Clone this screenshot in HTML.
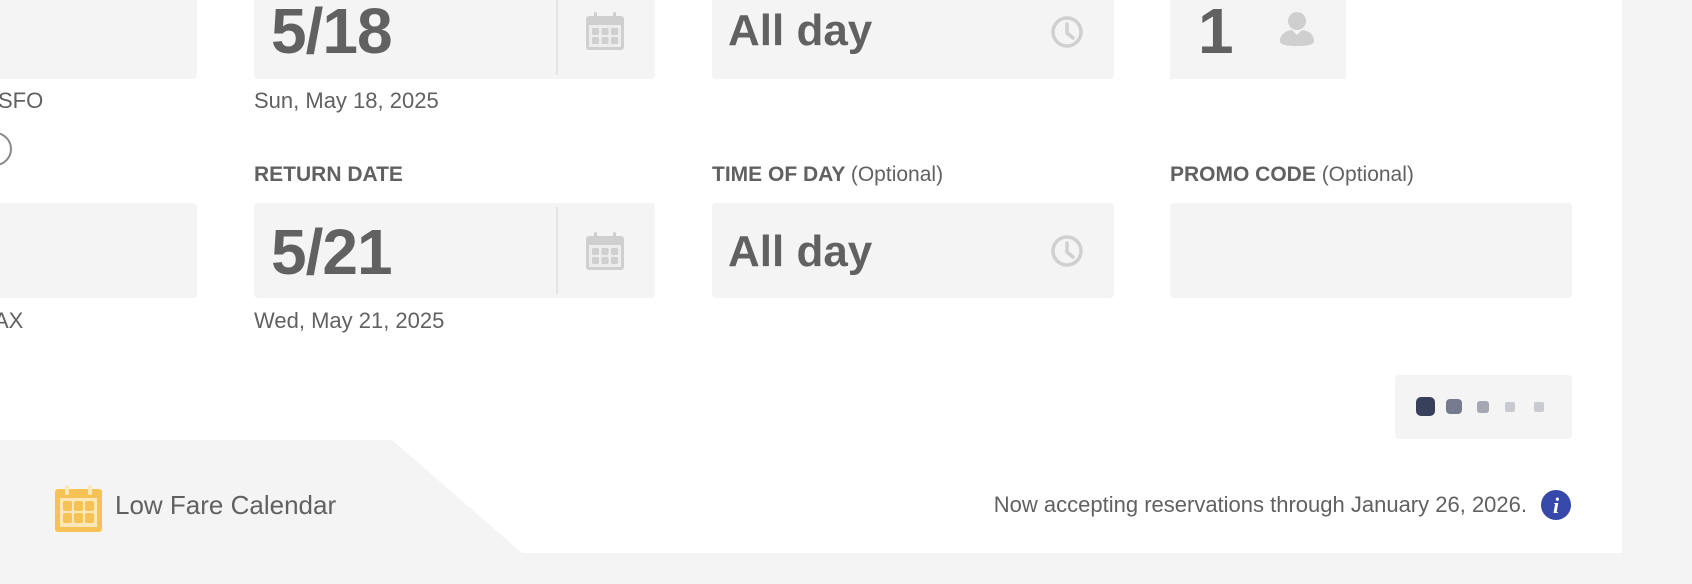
<!DOCTYPE html>
<html><head><style>
*{margin:0;padding:0;box-sizing:border-box}
body{width:1692px;height:584px;background:#f4f4f4;position:relative;overflow:hidden;font-family:"Liberation Sans",Arial,sans-serif;color:#616161}
.panel{position:absolute;left:0;top:0;width:1622px;height:553px;background:#fff}
.box{position:absolute;background:#f4f4f4;border-radius:4px}
.big{position:absolute;font-weight:bold;color:#616161}
.t{position:absolute;white-space:nowrap}
.lbl{position:absolute;font-size:21px;font-weight:bold;white-space:nowrap}
.lbl span{font-weight:normal}
.div{position:absolute;top:4px;bottom:4px;left:302px;width:2px;background:#e4e4e4}
</style></head><body>
<div class="panel"></div>
<svg style="position:absolute;left:0;top:0" width="1622" height="553"><polygon points="0,440 392,440 522,553 0,553" fill="#f4f4f4"/></svg>

<!-- left column -->
<div class="box" style="left:-10px;top:-10px;width:207px;height:89px"></div>
<div class="t" style="left:-2px;top:88px;font-size:22px">SFO</div>
<svg style="position:absolute;left:0;top:128px" width="20" height="44"><circle cx="-5" cy="21" r="16" fill="none" stroke="#888" stroke-width="2"/></svg>
<div class="box" style="left:-10px;top:203px;width:207px;height:95px"></div>
<div class="t" style="left:-6px;top:308px;font-size:22px">AX</div>

<!-- depart -->
<div class="box" style="left:254px;top:-10px;width:401px;height:89px"><div class="div"></div>
<div class="big" style="left:17px;top:4px;font-size:64px;letter-spacing:-1px">5/18</div>
<svg style="position:absolute;left:331px;top:22px" width="40" height="40" viewBox="0 0 40 40"><rect x="1" y="4" width="38" height="34" rx="3" fill="#cfcfcf"/><rect x="4" y="13" width="32" height="22" fill="#ececec"/><rect x="9" y="0" width="3" height="8" rx="1.5" fill="#cfcfcf"/><rect x="28" y="0" width="3" height="8" rx="1.5" fill="#cfcfcf"/><g fill="#cfcfcf"><rect x="7" y="16" width="7" height="7" rx="1.5"/><rect x="16.5" y="16" width="7" height="7" rx="1.5"/><rect x="26" y="16" width="7" height="7" rx="1.5"/><rect x="7" y="25" width="7" height="7" rx="1.5"/><rect x="16.5" y="25" width="7" height="7" rx="1.5"/><rect x="26" y="25" width="7" height="7" rx="1.5"/></g></svg>
</div>
<div class="t" style="left:254px;top:88px;font-size:22px">Sun, May 18, 2025</div>

<div class="lbl" style="left:254px;top:163px">RETURN DATE</div>
<div class="box" style="left:254px;top:203px;width:401px;height:95px"><div class="div"></div>
<div class="big" style="left:17px;top:12px;font-size:64px;letter-spacing:-1px">5/21</div>
<svg style="position:absolute;left:331px;top:29px" width="40" height="40" viewBox="0 0 40 40"><rect x="1" y="4" width="38" height="34" rx="3" fill="#cfcfcf"/><rect x="4" y="13" width="32" height="22" fill="#ececec"/><rect x="9" y="0" width="3" height="8" rx="1.5" fill="#cfcfcf"/><rect x="28" y="0" width="3" height="8" rx="1.5" fill="#cfcfcf"/><g fill="#cfcfcf"><rect x="7" y="16" width="7" height="7" rx="1.5"/><rect x="16.5" y="16" width="7" height="7" rx="1.5"/><rect x="26" y="16" width="7" height="7" rx="1.5"/><rect x="7" y="25" width="7" height="7" rx="1.5"/><rect x="16.5" y="25" width="7" height="7" rx="1.5"/><rect x="26" y="25" width="7" height="7" rx="1.5"/></g></svg>
</div>
<div class="t" style="left:254px;top:308px;font-size:22px">Wed, May 21, 2025</div>

<!-- time -->
<div class="box" style="left:712px;top:-10px;width:402px;height:89px">
<div class="big" style="left:16px;top:16px;font-size:44px">All day</div>
<svg style="position:absolute;left:337px;top:24px" width="36" height="36" viewBox="0 0 36 36"><circle cx="18" cy="18" r="14" fill="none" stroke="#d0d0d0" stroke-width="3.5"/><path d="M18 10v9l6 5" fill="none" stroke="#d0d0d0" stroke-width="3.5" stroke-linecap="round"/></svg>
</div>
<div class="lbl" style="left:712px;top:163px">TIME OF DAY <span>(Optional)</span></div>
<div class="box" style="left:712px;top:203px;width:402px;height:95px">
<div class="big" style="left:16px;top:24px;font-size:44px">All day</div>
<svg style="position:absolute;left:337px;top:30px" width="36" height="36" viewBox="0 0 36 36"><circle cx="18" cy="18" r="14" fill="none" stroke="#d0d0d0" stroke-width="3.5"/><path d="M18 10v9l6 5" fill="none" stroke="#d0d0d0" stroke-width="3.5" stroke-linecap="round"/></svg>
</div>

<!-- passengers -->
<div class="box" style="left:1170px;top:-10px;width:176px;height:89px;border-radius:0">
<div class="big" style="left:28px;top:4px;font-size:64px">1</div>
<svg style="position:absolute;left:108px;top:20px" width="38" height="38" viewBox="0 0 38 38"><circle cx="19" cy="11" r="9" fill="#cfcfcf"/><path d="M2 31c0-8 8-11 12-11l5 5 5-5c4 0 12 3 12 11 0 4-7 5-17 5S2 35 2 31z" fill="#cfcfcf"/></svg>
</div>
<div class="lbl" style="left:1170px;top:163px">PROMO CODE <span>(Optional)</span></div>
<div class="box" style="left:1170px;top:203px;width:402px;height:95px"></div>

<!-- dots -->
<div class="box" style="left:1395px;top:375px;width:177px;height:64px">
<div style="position:absolute;left:21px;top:22px;width:19px;height:19px;border-radius:5px;background:#39405b"></div>
<div style="position:absolute;left:51px;top:24px;width:16px;height:15px;border-radius:4px;background:#767a8e"></div>
<div style="position:absolute;left:82px;top:26px;width:12px;height:12px;border-radius:3px;background:#a6a7b2"></div>
<div style="position:absolute;left:110px;top:27px;width:10px;height:10px;border-radius:2px;background:#c9cad0"></div>
<div style="position:absolute;left:139px;top:27px;width:10px;height:10px;border-radius:2px;background:#c9cad0"></div>
</div>

<!-- footer -->
<svg style="position:absolute;left:55px;top:485px" width="47" height="47" viewBox="0 0 47 47"><rect x="0" y="4" width="47" height="43" rx="3" fill="#f6c254"/><rect x="5" y="13" width="37" height="29" fill="#fbe7b7"/><rect x="10" y="0" width="4" height="10" rx="2" fill="#fbe7b7"/><rect x="33" y="0" width="4" height="10" rx="2" fill="#fbe7b7"/><g fill="#f6c254"><rect x="8" y="16" width="9" height="10" rx="2"/><rect x="19" y="16" width="9" height="10" rx="2"/><rect x="30" y="16" width="9" height="10" rx="2"/><rect x="8" y="28" width="9" height="10" rx="2"/><rect x="19" y="28" width="9" height="10" rx="2"/><rect x="30" y="28" width="9" height="10" rx="2"/></g></svg>
<div class="t" style="left:115px;top:490px;font-size:26px">Low Fare Calendar</div>
<div class="t" style="right:165px;top:492px;font-size:22px">Now accepting reservations through January 26, 2026.</div>
<svg style="position:absolute;left:1540px;top:489px" width="32" height="32" viewBox="0 0 32 32"><circle cx="16" cy="16" r="15" fill="#3649ab"/><text x="16" y="24" text-anchor="middle" fill="#fff" font-family="Liberation Serif,serif" font-style="italic" font-weight="bold" font-size="22">i</text></svg>
</body></html>
